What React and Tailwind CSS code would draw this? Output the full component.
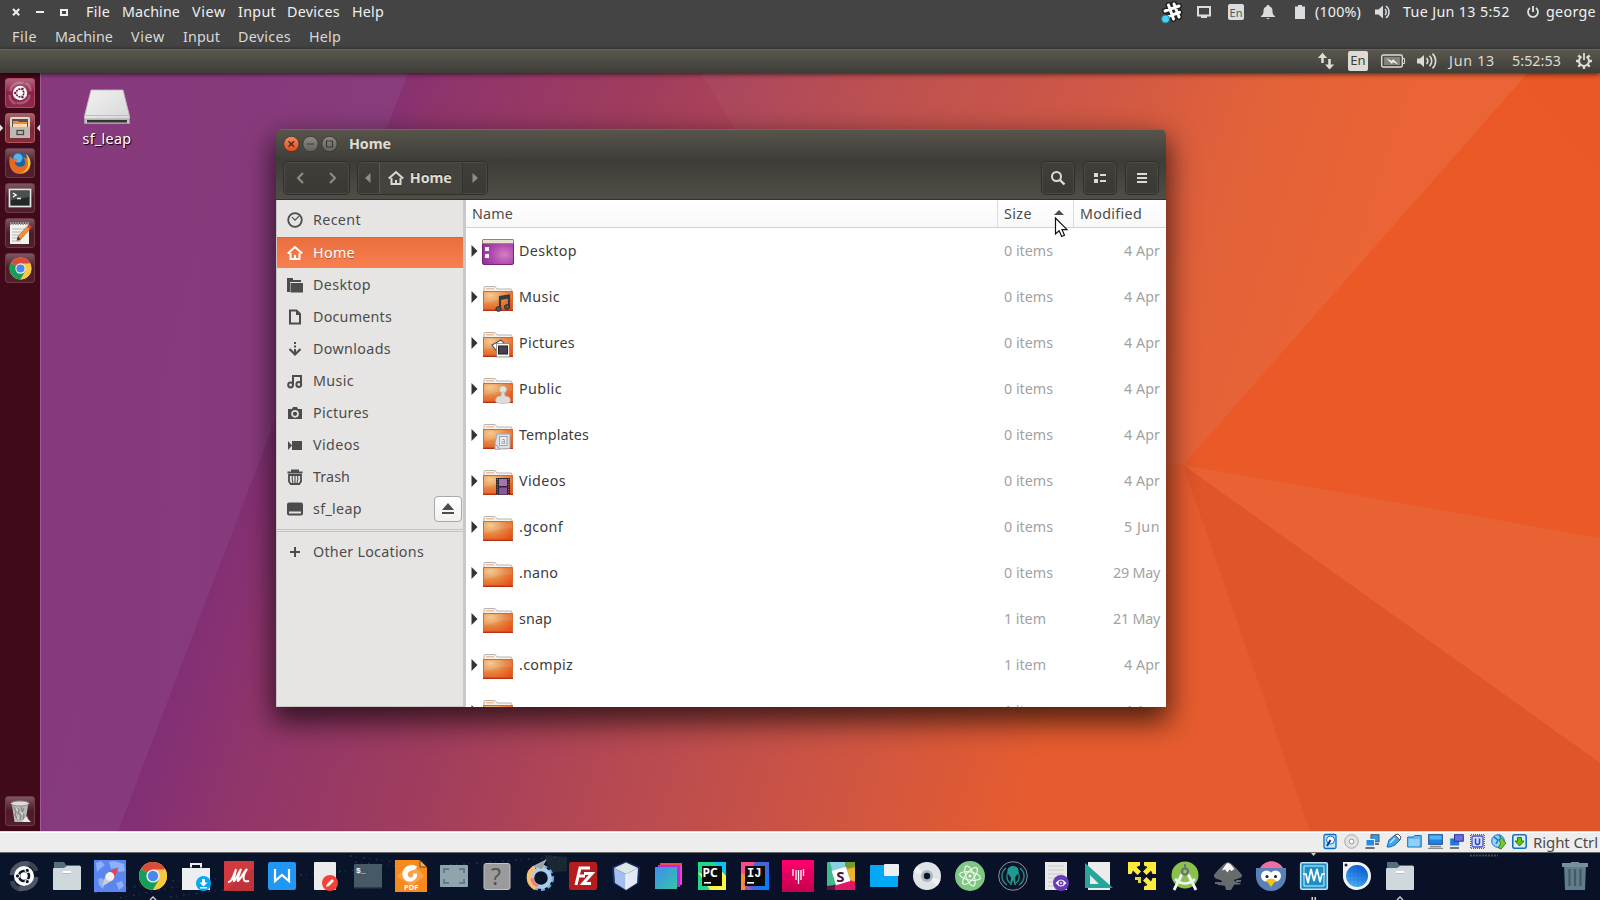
import React, { useLayoutEffect, useRef, useState } from "react";

/* Text that spreads its letters evenly over the width of its box. */
function Fit({ className = "", children }) {
  const box = useRef(null);
  const ink = useRef(null);
  const [gap, setGap] = useState(0);
  useLayoutEffect(() => {
    const n = String(children).length;
    setGap((box.current.clientWidth - ink.current.getBoundingClientRect().width) / n);
  }, []);
  return (
    <span ref={box} className={"block shrink-0 whitespace-nowrap " + className}>
      <span ref={ink} className="inline-block" style={{ letterSpacing: gap + "px" }}>{children}</span>
    </span>
  );
}

function Ico({ s = 16, className = "", children, vb }) {
  return (
    <svg width={s} height={s} viewBox={vb || `0 0 ${s} ${s}`} className={"block shrink-0 overflow-visible " + className}>
      {children}
    </svg>
  );
}

/* ---------- top bars ---------- */

function HostBar() {
  return (
    <div className="flex h-[24px] items-center bg-[#444] text-[#f0f0f0]">
      <div className="flex w-[86px] shrink-0 items-center pl-[12px]">
        <Ico s={8}><path d="M1 1l6.2 6.2M7.2 1L1 7.2" stroke="#eee" strokeWidth="2.1" /></Ico>
        <div className="ml-[16px] h-[2px] w-[8px] bg-[#eee]" />
        <div className="ml-[16px] h-[7px] w-[8px] border-2 border-[#eee]" />
      </div>
      <Fit className="w-[24px]">File</Fit>
      <Fit className="ml-[12px] w-[58px]">Machine</Fit>
      <Fit className="ml-[12px] w-[34px]">View</Fit>
      <Fit className="ml-[12px] w-[38px]">Input</Fit>
      <Fit className="ml-[11px] w-[53px]">Devices</Fit>
      <Fit className="ml-[12px] w-[32px]">Help</Fit>
      <div className="ml-auto flex items-center">
        <Ico s={22} className="mr-[14px]">
          <g stroke="#222" strokeWidth="6" strokeLinecap="round"><path d="M7.5 4l5 14M13 3l5 13M4 10l14-5M5.500 16l13-4.700" /></g>
          <g stroke="#fff" strokeWidth="3" strokeLinecap="round"><path d="M7.500 4l5 14M13 3l5 13M4 10l14-5M5.500 16l13-4.700" /></g>
          <circle cx="4.500" cy="18" r="4" fill="#45d0f7" stroke="#2a6f86" strokeWidth=".8" />
        </Ico>
        <Ico s={14} className="mr-[17px]"><path d="M1 2h12v8.500H1z" fill="none" stroke="#d9dde0" strokeWidth="2" /><path d="M4 11h6v2H4z" fill="#d9dde0" /></Ico>
        <div className="mr-[17px] flex h-[16px] w-[16px] items-center justify-center rounded-[2px] bg-[#d9dde0] text-[11px] leading-none text-[#555]">En</div>
        <Ico s={14} className="mr-[20px]"><path d="M7 0c1 0 1.500.7 1.500 1.400C10.700 2 11.500 4 11.500 6c0 3 .8 4 2.500 5.300V12H0v-.7C1.700 10 2.500 9 2.500 6c0-2 .8-4 3-4.600C5.500.7 6 0 7 0zM5 13h4l-2 1.200z" fill="#d9dde0" /></Ico>
        <Ico s={14} vb="0 0 14 14" className="mr-[5px]"><path d="M3 0h4v1.500h3V14H0V1.500h3z" fill="#d9dde0" /></Ico>
        <Fit className="ml-px w-[46px]">(100%)</Fit>
        <Ico s={16} className="ml-[14px] mr-[12px]"><path d="M0 5.500h3.500L8 1.500v13l-4.500-4H0z" fill="#d9dde0" /><path d="M10 5c1.600 1.500 1.600 4.500 0 6M11 2.200c4 2.500 4 9 0 11.600" fill="none" stroke="#d9dde0" strokeWidth="1.500" /></Ico>
        <Fit className="w-[107px]">Tue Jun 13  5:52</Fit>
        <Ico s={12} className="ml-[17px] mr-[7px]"><path d="M3 2a5 5 0 1 0 6 0" fill="none" stroke="#e2e4e6" strokeWidth="1.700" /><path d="M6 0v6" stroke="#e2e4e6" strokeWidth="1.800" /></Ico>
        <Fit className="mr-[4px] w-[50px]">george</Fit>
      </div>
    </div>
  );
}

function MachineMenu() {
  return (
    <div className="flex h-[25px] items-center bg-[#444] pl-[12px] text-[#d8d8d8]">
      <Fit className="w-[25px]">File</Fit>
      <Fit className="ml-[18px] w-[58px]">Machine</Fit>
      <Fit className="ml-[18px] w-[34px]">View</Fit>
      <Fit className="ml-[18px] w-[37px]">Input</Fit>
      <Fit className="ml-[18px] w-[53px]">Devices</Fit>
      <Fit className="ml-[18px] w-[32px]">Help</Fit>
    </div>
  );
}

function GuestPanel() {
  return (
    <div className="relative z-10 flex h-[24px] items-center justify-end border-t border-[#676459] bg-linear-to-b from-[#5a574e] to-[#3e3d38] pb-[2px] text-[#dfdbd2] shadow-[0_1px_5px_rgba(0,0,0,0.7)]">
      <Ico s={18} className="mr-[13px]"><path d="M5.500 2v9M12.500 7v9" stroke="#dfdbd2" strokeWidth="2.600" /><path d="M.8 6L5.500.8 10.200 6zM8 12.500l4.500 5 4.700-5z" fill="#dfdbd2" /></Ico>
      <div className="mr-[13px] flex h-[20px] w-[20px] items-center justify-center rounded-[2px] bg-[#dfdbd2] text-[13px] leading-none text-[#3f3e39]">En</div>
      <svg width="24" height="14" className="mr-[12px] block"><rect x=".7" y="1" width="20.600" height="12" rx="1.500" fill="none" stroke="#dfdbd2" strokeWidth="1.400" /><rect x="3" y="3" width="16" height="8" fill="#85827a" /><path d="M22 4.500h1.500v5H22" fill="none" stroke="#dfdbd2" /><path d="M5 4l6 3 1-2 6 6-6-3-1 2z" fill="#f2efe8" /></svg>
      <Ico s={20} className="mr-[12px]"><path d="M0 7.500h3L7 4v12l-4-3.500H0z" fill="#dfdbd2" /><path d="M9.500 7c1.600 1.800 1.600 4.200 0 6M12.500 4.800c3 3 3 7.400 0 10.400M15.500 2.600c4.200 4 4.200 10.800 0 14.800" fill="none" stroke="#dfdbd2" strokeWidth="1.600" /></Ico>
      <Fit className="w-[46px]">Jun 13</Fit>
      <Fit className="ml-[17px] w-[49px]">5:52:53</Fit>
      <Ico s={16} className="ml-[15px] mr-[8px]">
        <g stroke="#dfdbd2" strokeWidth="2.400"><path d="M8 13v3M0 8h3M13 8h3M2.300 13.700l2.200-2.200M13.700 13.700l-2.200-2.200M2.300 2.300l2.200 2.200M13.700 2.300l-2.200 2.200" /></g>
        <path d="M5.500 3.600a5 5 0 1 0 5 0" fill="none" stroke="#dfdbd2" strokeWidth="2" /><path d="M8 0v7" stroke="#dfdbd2" strokeWidth="1.800" />
      </Ico>
    </div>
  );
}

/* ---------- wallpaper ---------- */

function Wallpaper() {
  return (
    <svg className="absolute inset-0 h-full w-full" viewBox="0 73 1600 758" preserveAspectRatio="none">
      <defs>
        <linearGradient id="wpMain" gradientUnits="userSpaceOnUse" x1="370" y1="73" x2="1180" y2="330">
          <stop offset="0" stopColor="#822f75" /><stop offset=".1" stopColor="#90356b" /><stop offset=".3" stopColor="#9f3c5e" /><stop offset=".55" stopColor="#b84a50" /><stop offset=".78" stopColor="#cf5542" /><stop offset="1" stopColor="#e65c2e" />
        </linearGradient>
        <linearGradient id="wpLeft" x1="0" y1="0" x2="1" y2="0"><stop offset="0" stopColor="#863a7e" /><stop offset=".6" stopColor="#87397a" /><stop offset="1" stopColor="#893c7a" /></linearGradient>
        <linearGradient id="wpTop" gradientUnits="userSpaceOnUse" x1="700" y1="73" x2="1350" y2="280">
          <stop offset="0" stopColor="#a84660" /><stop offset=".28" stopColor="#be5150" /><stop offset=".58" stopColor="#d05845" /><stop offset=".78" stopColor="#e2613a" /><stop offset="1" stopColor="#ea6435" />
        </linearGradient>
        <linearGradient id="wpRight" gradientUnits="userSpaceOnUse" x1="1200" y1="465" x2="1600" y2="120"><stop offset="0" stopColor="#ea5a28" /><stop offset="1" stopColor="#ea5825" /></linearGradient>
      </defs>
      <rect x="0" y="73" width="1600" height="758" fill="url(#wpMain)" />
      <path d="M0 73H408L118 831H0z" fill="url(#wpLeft)" />
      <path d="M240 73H408L118 831H40z" fill="#fff" opacity=".008" />
      <path d="M700 73H1528L1183 465H952z" fill="url(#wpTop)" />
      <path d="M1528 73H1600V538L1183 465z" fill="url(#wpRight)" />
      <path d="M1183 465L1600 538V763z" fill="#e96234" />
      <path d="M1183 465L1600 763V831H1310z" fill="#e05529" />
    </svg>
  );
}

/* ---------- launcher ---------- */

function ChromeLogo() {
  return (
    <g>
      <circle cx="16" cy="16" r="14" fill="#fbc93f" />
      <path d="M16 16L3.900 9A14 14 0 0 1 28.100 9z" fill="#db4a3a" />
      <path d="M3.900 9A14 14 0 0 0 16 30l6-10.500L16 16z" fill="#149d5b" />
      <path d="M16 9.500h12.400A14 14 0 0 1 16 30l6-10z" fill="#fbc93f" />
      <circle cx="16" cy="16" r="6.600" fill="#f4f4f4" /><circle cx="16" cy="16" r="5.200" fill="#4a87ee" />
    </g>
  );
}

function UbuntuMark({ dark }) {
  return (
    <g>
      <circle cx="16" cy="16" r="8.200" fill="#fff" />
      <circle cx="16" cy="16" r="4.300" fill="none" stroke={dark} strokeWidth="2" />
      {[0, 120, 240].map((a) => (
        <g key={a} transform={`rotate(${a} 16 16)`}><path d="M16 16h-6" stroke="#fff" strokeWidth="1" transform="rotate(60 16 16)" /><circle cx="10.500" cy="16" r="1.900" fill={dark} stroke="#fff" strokeWidth=".9" /></g>
      ))}
    </g>
  );
}

function Tile({ tone, children }) {
  return (
    <div className={"flex h-[30px] w-[30px] shrink-0 items-center justify-center rounded-[3px] border bg-linear-to-b " + tone}>{children}</div>
  );
}

const glass = "border-[#6b3a49] from-[#7d5763] via-[#4c1a29] to-[#511f2d]";

function Launcher() {
  return (
    <div className="relative flex w-[40px] shrink-0 flex-col items-center gap-[5px] bg-[#400a1b] pt-[5px] pb-[5px] shadow-[1px_0_0_#a05a97]">
      <Tile tone="border-[#b04a68] from-[#b26480] via-[#8b1f48] to-[#8c2b4a]">
        <Ico s={28} vb="0 0 32 32"><g fill="none" stroke="#fff" opacity=".22" strokeWidth="3"><path d="M5 14C6 6 14 3 20 5M27 18c-1 8-9 11-15 9M4 18c0 5 3 9 7 10M28 14c0-5-3-8-6-9" /></g><UbuntuMark dark="#6d1638" /></Ico>
      </Tile>
      <Tile tone="border-[#b05560] from-[#a86065] via-[#7d2a35] to-[#83303a]">
        <Ico s={24} vb="0 0 24 24"><rect x="2" y="1" width="20" height="21" rx="1.500" fill="#ddd9d4" /><rect x="4" y="3" width="16" height="8" fill="#5b5048" /><path d="M5 5h5l1 1h8v5H5z" fill="#f08a3c" /><path d="M5 8h14v3H5z" fill="#fbd9b0" /><path d="M2 11h20v11H2z" fill="#bdbab4" /><rect x="9" y="14.500" width="6.500" height="4" fill="none" stroke="#4b4a46" strokeWidth="1.300" /></Ico>
      </Tile>
      <Tile tone={glass}>
        <Ico s={24} vb="0 0 24 24"><circle cx="12" cy="12" r="10.500" fill="#1e63a8" /><circle cx="10" cy="7" r="4.500" fill="#56b5e8" /><path d="M2 5c1 1 1 2 3 3 2-.5 4 0 5 1-3 1-4 3-2 5 3 3 8 2 9-1 .5-3-.5-5-2-7 5 2 5 3 5 0l2 4c2 7-3 13-10 13S-.500 17 2 5z" fill="#e66a1f" /><path d="M18 3c4 3 6 9 3 14-2 4-6 5-9 5 5-1 8-5 8-9 0-4-1-7-2-10z" fill="#f8c93c" /></Ico>
      </Tile>
      <Tile tone={glass}>
        <Ico s={24} vb="0 0 24 24"><rect x="1.500" y="3.500" width="21" height="17" fill="#222a29" stroke="#e6e6e4" strokeWidth="1.700" /><path d="M3 5h18v6L3 14z" fill="#4a504f" /><path d="M5 7l3 2-3 2M9 12.500h4" fill="none" stroke="#fff" strokeWidth="1.400" /></Ico>
      </Tile>
      <Tile tone={glass}>
        <Ico s={24} vb="0 0 24 24"><rect x="2" y="3" width="19" height="20" fill="#f2f1ee" /><path d="M2 2.500h19" stroke="#9a9a96" strokeWidth="3" strokeDasharray="1.500 1" /><path d="M4 8h13M4 11h10M4 14h8M4 17h6M4 20h9" stroke="#b5b5b0" strokeWidth="1" /><path d="M10 15.500L19 5.500l3 2.500-9.500 10.500-3.500 1z" fill="#f0913a" stroke="#b55a1a" strokeWidth=".6" /><path d="M19 5.500l2-2.200 3 2.700-2 2z" fill="#e0393e" /><path d="M9 19.500l1-4 2.500 2.800z" fill="#333" /></Ico>
      </Tile>
      <Tile tone={glass}><Ico s={25} vb="0 0 32 32"><ChromeLogo /></Ico></Tile>
      <div className="mt-auto">
        <Tile tone={glass}>
          <Ico s={24} vb="0 0 24 24"><path d="M4 6h16l-2.500 17h-11z" fill="#b9bab7" /><ellipse cx="12" cy="4.500" rx="9" ry="2.500" fill="#dcdcd9" stroke="#8c8c88" /><path d="M6 8l2 5-1 3 3 5M9 9l2 2-1 3 3 2-1 5M16 9l-2 5 2 2-1 5M13 8l1 4" stroke="#868783" strokeWidth="1.300" fill="none" /><path d="M8 9l2 1-1 2zM13 13l2 1-1 3zM9 18l2 1-1 2z" fill="#ededea" /><path d="M14 22l5-5 1 3 3 3h-7z" fill="#e9e9e6" /></Ico>
        </Tile>
      </div>
      <svg className="absolute top-[50px] left-0" width="40" height="10"><path d="M0 1.500L3.200 5 0 8.500zM40 1.500L36.800 5 40 8.500z" fill="#e6dfe0" /></svg>
    </div>
  );
}

/* ---------- file manager ---------- */

const HomeGlyph = ({ c }) => (
  <Ico><path d="M.8 8.500L8 2l7.200 6.500" fill="none" stroke={c} strokeWidth="2" /><path d="M3.500 8v6h9V8" fill="none" stroke={c} strokeWidth="2" /><path d="M7 10h2v4H7z" fill={c} /></Ico>
);

const G = "#4c4c4c";
const places = [
  { n: "Desktop", w: "w-[58px]", i: <Ico><path d="M0 1h6v2h8v2H3v10H0z" fill={G} /><path d="M3.500 6H16v9.500H3.500z" fill={G} /></Ico> },
  { n: "Documents", w: "w-[79px]", i: <Ico><path d="M3 1.500h6.500L13 5v9.500H3z" fill="none" stroke={G} strokeWidth="2" /><path d="M9 1v5h4z" fill={G} /></Ico> },
  { n: "Downloads", w: "w-[78px]", i: <Ico><path d="M8 1v2M8 4.500v2M8 8v5" stroke={G} strokeWidth="2" /><path d="M2.500 8L8 13.500 13.500 8" fill="none" stroke={G} strokeWidth="2.200" /></Ico> },
  { n: "Music", w: "w-[41px]", i: <Ico><path d="M6 12V3h8v8" fill="none" stroke={G} strokeWidth="2" /><circle cx="3.600" cy="12" r="2.400" fill="none" stroke={G} strokeWidth="2" /><circle cx="11.800" cy="11.500" r="2.400" fill="none" stroke={G} strokeWidth="2" /></Ico> },
  { n: "Pictures", w: "w-[56px]", i: <Ico><path d="M1 4h4l1-2h4l1 2h4v10H1z" fill={G} /><circle cx="8" cy="8.800" r="3" fill="none" stroke="#e6e5e4" strokeWidth="1.700" /></Ico> },
  { n: "Videos", w: "w-[47px]", i: <Ico><path d="M5 4h10v9H5z" fill={G} /><path d="M1 4l4 4.500L1 13z" fill={G} /></Ico> },
  { n: "Trash", w: "w-[37px]", i: <Ico><path d="M.5 3.500h15M4 1.500h8" stroke={G} strokeWidth="2" /><path d="M2 6h12v6.500l-1.800 2.500H3.800L2 12.500z" fill="none" stroke={G} strokeWidth="1.800" /><path d="M5.500 6c-.7 3-.7 5 .5 8M8 6v8M10.500 6c.7 3 .7 5-.5 8" fill="none" stroke={G} strokeWidth="1.100" /></Ico> },
  { n: "sf_leap", w: "w-[49px]", eject: true, i: <Ico><rect x="0" y="1.500" width="16" height="13" rx="2" fill={G} /><path d="M2 10.500h12v2H2z" fill="#e6e5e4" /></Ico> },
];

function Sidebar() {
  return (
    <div className="flex w-[190px] shrink-0 flex-col border-r-[3px] border-b border-l border-r-[#cac8c5] border-b-[#cac8c5] border-l-[#cac8c5] bg-[#e6e5e4] text-[#4c4c4c]">
      <div className="flex h-[37px] items-center gap-[10px] pt-[3px] pl-[10px]">
        <Ico><circle cx="8" cy="8" r="6.800" fill="none" stroke={G} strokeWidth="1.800" /><path d="M5 5.200l3 3 4-4" fill="none" stroke={G} strokeWidth="1.200" /></Ico>
        <Fit className="w-[48px]">Recent</Fit>
      </div>
      <div className="mb-px flex h-[31px] items-center gap-[10px] border-t border-[#d9673a] bg-linear-to-b from-[#e96f3d] to-[#f87f50] pl-[10px] text-white [text-shadow:0_1px_0_rgba(0,0,0,0.3)]">
        <HomeGlyph c="#fff" /><Fit className="w-[42px]">Home</Fit>
      </div>
      {places.map((p) => (
        <div key={p.n} className="flex h-[32px] shrink-0 items-center gap-[10px] pl-[10px]">
          {p.i}<Fit className={p.w}>{p.n}</Fit>
          {p.eject && (
            <div className="mr-[1px] ml-auto flex h-[26px] w-[28px] items-center justify-center rounded-[4px] border border-[#aaa8a4] bg-linear-to-b from-white to-[#f1f0ef]">
              <Ico s={12}><path d="M6 0l6 7H0zM0 9h12v2H0z" fill={G} /></Ico>
            </div>
          )}
        </div>
      ))}
      <div className="mt-[4px] h-[3px] border-y border-[#c6c4c1]" />
      <div className="flex h-[39px] items-center gap-[10px] pl-[10px]">
        <Ico><path d="M8 3v10M3 8h10" stroke={G} strokeWidth="2" /></Ico>
        <Fit className="w-[111px]">Other Locations</Fit>
      </div>
    </div>
  );
}

const emblems = {
  music: <g><path d="M17 23V11l9-1.500V20" fill="none" stroke="#3a3a3a" strokeWidth="2.200" /><path d="M17 10.500l9-1.500v3.500l-9 1.500z" fill="#3a3a3a" /><ellipse cx="15.500" cy="23" rx="2.700" ry="2.300" fill="#555" stroke="#2d2d2d" /><ellipse cx="24" cy="21" rx="2.700" ry="2.300" fill="#555" stroke="#2d2d2d" /></g>,
  pictures: <g><path d="M9 13l9-5 3 3-6 10z" fill="#fff" stroke="#555" strokeWidth="1.200" /><rect x="13.500" y="11.500" width="13" height="13.500" fill="#f5f5f3" stroke="#777" strokeWidth=".7" /><rect x="15.500" y="14" width="9" height="8" fill="#4b3d52" stroke="#222" /></g>,
  public: <g><circle cx="20" cy="11.500" r="3.600" fill="#e3e3e1" stroke="#aaa" strokeWidth=".5" /><path d="M18.500 14h3l.5 4c4 0 5.500 2 5.500 4.500 0 2.500-3 3-7.500 3s-7.500-.5-7.500-3c0-2.500 2-4.500 5.500-4.500z" fill="#dcdcda" stroke="#aaa" strokeWidth=".5" /></g>,
  templates: <g><path d="M12 25.500V19.500l2-9.500h13v14.500l-9 .5z" fill="#dddfe3" stroke="#a4a7ae" /><rect x="16.500" y="12.500" width="7.500" height="9" fill="#eceef0" stroke="#a0a4ac" /><path d="M12 20l5 5" stroke="#8f939b" /><text x="18" y="20" fontSize="8" fill="#8a8e96">a</text></g>,
  videos: <g><rect x="13" y="8" width="14" height="17" fill="#2e2830" /><path d="M14.300 9v16M25.700 9v16" stroke="#e07a3a" strokeWidth="1" strokeDasharray="1 1.500" /><rect x="16" y="9" width="8" height="7" fill="#a574b4" /><rect x="16" y="17.500" width="8" height="7" fill="#8a559c" /></g>,
};

function Folder({ kind }) {
  if (kind === "desktop")
    return (
      <svg width="32" height="26" className="mr-[5px] ml-[5px] mt-[2px] block shrink-0">
        <rect x=".5" y=".5" width="31" height="25" rx="1.500" fill="url(#deskFill)" stroke="#7b1f78" />
        <path d="M.5 4.500V1.500Q.5.500 1.500.5h29q1 0 1 1v3z" fill="#e4e3cc" stroke="#88875f" strokeWidth=".8" />
        <path d="M3 8h4v4H3zM3 15h4v4H3z" fill="#f5eef5" />
      </svg>
    );
  return (
    <svg width="30" height="26" className="mr-[6px] ml-[6px] mt-[4px] block shrink-0 overflow-visible">
      <path d="M1 6V1.500Q1 .5 2 .5h10l2 2.500h14q.8 0 .8 1V6z" fill="#f4f3f1" stroke="#b9b4ae" />
      <path d="M3 2.800h8" stroke="#f0a673" />
      <path d="M0 5.500h30V24.500H0z" fill="url(#folderFill)" />
      <path d="M.5 5.500h29v18.500H.5z" fill="none" stroke="#d8692f" />
      <path d="M1 6.500h28v6C20 12 11 14 1 18z" fill="#fff" opacity=".1" />
      <path d="M0 24.300h30" stroke="#b02a0c" strokeWidth="1.200" />
      {emblems[kind]}
    </svg>
  );
}

const rows = [
  ["Desktop", "w-[58px]", "0 items", "4 Apr", "desktop"],
  ["Music", "w-[41px]", "0 items", "4 Apr", "music"],
  ["Pictures", "w-[56px]", "0 items", "4 Apr", "pictures"],
  ["Public", "w-[43px]", "0 items", "4 Apr", "public"],
  ["Templates", "w-[70px]", "0 items", "4 Apr", "templates"],
  ["Videos", "w-[47px]", "0 items", "4 Apr", "videos"],
  [".gconf", "w-[44px]", "0 items", "5 Jun"],
  [".nano", "w-[39px]", "0 items", "29 May"],
  ["snap", "w-[33px]", "1 item", "21 May"],
  [".compiz", "w-[54px]", "1 item", "4 Apr"],
  ["", "w-[40px]", "1 item", "4 Apr"],
];
const dateWidth = { "4 Apr": "w-[36px]", "5 Jun": "w-[36px]", "29 May": "w-[47px]", "21 May": "w-[47px]" };

function FileList() {
  return (
    <div className="relative flex min-w-0 flex-1 flex-col overflow-hidden bg-white">
      <svg width="0" height="0" className="absolute">
        <defs>
          <radialGradient id="folderFill" cx=".25" cy=".2" r=".95"><stop offset="0" stopColor="#f5c585" /><stop offset=".5" stopColor="#e58540" /><stop offset="1" stopColor="#ea4d17" /></radialGradient>
          <radialGradient id="deskFill" cx=".7" cy=".6" r=".8"><stop offset="0" stopColor="#d77fc0" /><stop offset=".5" stopColor="#b04bb0" /><stop offset="1" stopColor="#83358a" /></radialGradient>
        </defs>
      </svg>
      <div className="flex h-[28px] shrink-0 border-b border-[#d3d2d0] bg-linear-to-b from-white to-[#f8f8f8] text-[#4c4c4c]">
        <div className="flex w-[532px] items-center border-r border-[#dddcda] pl-[6px]"><Fit className="w-[41px]">Name</Fit></div>
        <div className="flex w-[76px] items-center border-r border-[#dddcda] pl-[6px]">
          <Fit className="w-[28px]">Size</Fit>
          <svg width="10" height="5" className="mt-[-2px] ml-[22px]"><path d="M5 0l5 5H0z" fill={G} /></svg>
        </div>
        <div className="flex items-center pl-[6px]"><Fit className="w-[62px]">Modified</Fit></div>
      </div>
      {rows.map((r, i) => (
        <div key={i} className="flex h-[46px] shrink-0 items-center text-[#3c3c3c]">
          <svg width="7" height="12" className="ml-[5px] -mr-px block shrink-0"><path d="M.5 0l6 6-6 6z" fill="#333" /></svg>
          <Folder kind={r[4]} />
          <div className="w-[485px]">{r[0] && <Fit className={r[1]}>{r[0]}</Fit>}</div>
          <div className="w-[76px] text-[#a2a2a2]"><Fit className={r[2] === "1 item" ? "w-[42px]" : "w-[49px]"}>{r[2]}</Fit></div>
          <div className="mr-[6px] ml-auto text-[#a2a2a2]"><Fit className={dateWidth[r[3]]}>{r[3]}</Fit></div>
        </div>
      ))}
    </div>
  );
}

const key = "rounded-[5px] border border-[#302f2b] shadow-[inset_0_0_0_1px_#4b4a44] bg-linear-to-b from-[#403f3a] to-[#3a3935]";

function FilesWindow() {
  return (
    <div className="absolute top-[56px] left-[276px] flex h-[578px] w-[890px] flex-col overflow-hidden rounded-t-[6px] shadow-[0_12px_28px_3px_rgba(0,0,0,0.66)]">
      <div className="flex h-[29px] shrink-0 items-center border-t border-[#6c695e] bg-linear-to-b from-[#57544b] to-[#403f3a] pb-px pl-[7px]">
        <svg width="56" height="18" className="block">
          <defs>
            <linearGradient id="btnRed" x1="0" y1="0" x2="0" y2="1"><stop offset="0" stopColor="#f58a64" /><stop offset="1" stopColor="#de4b18" /></linearGradient>
            <linearGradient id="btnGrey" x1="0" y1="0" x2="0" y2="1"><stop offset="0" stopColor="#8d8a82" /><stop offset="1" stopColor="#64625b" /></linearGradient>
          </defs>
          <circle cx="8.300" cy="9" r="7.700" fill="url(#btnRed)" stroke="#33322e" strokeWidth=".8" />
          <circle cx="27.500" cy="9" r="7.700" fill="url(#btnGrey)" stroke="#33322e" strokeWidth=".8" />
          <circle cx="46.500" cy="9" r="7.700" fill="url(#btnGrey)" stroke="#33322e" strokeWidth=".8" />
          <path d="M5.500 6.200l5.600 5.600M11.100 6.200l-5.600 5.600" stroke="#3d2b23" strokeWidth="1.300" />
          <path d="M24 9h7M43.500 6h6v6h-6z" fill="none" stroke="#3b3a36" strokeWidth="1.200" />
        </svg>
        <Fit className="ml-[10px] w-[42px] font-bold text-[#dfdbd2]">Home</Fit>
      </div>
      <div className="flex h-[42px] shrink-0 items-center border-b border-[#33322e] bg-linear-to-b from-[#3c3b37] to-[#504e46] px-[7px] pb-px">
        <div className={"flex h-[34px] w-[67px] items-center justify-between px-[12px] " + key}>
          <svg width="8" height="12"><path d="M7 1L2 6l5 5" fill="none" stroke="#918e86" strokeWidth="2" /></svg>
          <svg width="8" height="12"><path d="M1 1l5 5-5 5" fill="none" stroke="#918e86" strokeWidth="2" /></svg>
        </div>
        <div className={"ml-[7px] flex h-[34px] w-[131px] items-center " + key}>
          <div className="flex w-[21px] justify-center"><svg width="6" height="10"><path d="M5.500 0v10L0 5z" fill="#918e86" /></svg></div>
          <div className="flex h-[31px] w-[85px] items-center gap-[6px] border-x border-l-[#5b594f] border-r-[#33322e] bg-[#45433d] pl-[8px]">
            <HomeGlyph c="#dfdbd2" /><Fit className="w-[42px] font-bold text-[#dfdbd2] [text-shadow:0_-1px_0_#222]">Home</Fit>
          </div>
          <div className="flex w-[24px] justify-center"><svg width="6" height="10"><path d="M.5 0v10L6 5z" fill="#918e86" /></svg></div>
        </div>
        <div className="ml-auto flex gap-[8px]">
          <div className={"flex h-[34px] w-[34px] items-center justify-center " + key}><Ico><circle cx="6.500" cy="6.500" r="4.500" fill="none" stroke="#dfdbd2" strokeWidth="2" /><path d="M9.800 9.800l4.700 4.700" stroke="#dfdbd2" strokeWidth="2.400" /></Ico></div>
          <div className={"flex h-[34px] w-[34px] items-center justify-center " + key}><Ico><path d="M2 3h4v4H2zM2 9h4v4H2zM8 4h6v2H8zM8 10h6v2H8z" fill="#dfdbd2" /></Ico></div>
          <div className={"flex h-[34px] w-[34px] items-center justify-center " + key}><Ico><path d="M3 3h10v2H3zM3 7h10v2H3zM3 11h10v2H3z" fill="#dfdbd2" /></Ico></div>
        </div>
      </div>
      <div className="flex min-h-0 flex-1"><Sidebar /><FileList /></div>
    </div>
  );
}

/* ---------- status bar of the virtual machine ---------- */

const B = "#0f6fc6";
const statusIcons = [
  <g><rect x="1" y=".5" width="12" height="14" rx="1.500" fill="#bfe2f8" stroke={B} strokeWidth="1.300" /><circle cx="7.500" cy="6" r="4" fill="#fff" stroke={B} /><path d="M7.500 6L4 12" stroke="#0a3f86" strokeWidth="2" /></g>,
  <g><circle cx="7.500" cy="7.500" r="6.800" fill="#e2e2e2" stroke="#a8a8a8" /><circle cx="7.500" cy="7.500" r="2.300" fill="#fff" stroke="#999" /></g>,
  <g><rect x="6" y=".7" width="8" height="7" fill="#2f9bf0" stroke="#555" /><rect x="1" y="5.500" width="8.500" height="6.500" fill="#2688ea" stroke="#e8f2fb" /><path d="M.5 14h9M10 10h4" stroke="#444" strokeWidth="1.600" /></g>,
  <g><path d="M1 13l2-7 6-5 5 5-5 5-5 2z" fill="#42a4ee" stroke={B} /><path d="M9 1l3-1 3 3-1 3z" fill="#fff" stroke="#556" /><path d="M4 9l5-5" stroke="#bfe4ff" strokeWidth="1.500" /></g>,
  <g><path d="M.7 3h6l1-1.500h6.500V13H.7z" fill="#63b7f2" stroke={B} /><path d="M1.500 5h11v7.300h-11z" fill="#8fd0fa" /></g>,
  <g><rect x=".7" y=".7" width="13.600" height="9.600" fill="#2183ea" stroke="#1a4f8a" /><path d="M1.500 1.500h12v4h-12z" fill="#55b2f8" /><path d="M2 12.500h11M0 14.300h15" stroke="#8a8f94" strokeWidth="1.300" /></g>,
  <g><rect x=".7" y="4" width="10" height="8" fill="#2277dd" stroke="#e0eefb" /><rect x="5.500" y=".7" width="8.800" height="6.500" fill="#6d6ee0" stroke="#2c3596" /><path d="M1 14h9" stroke="#444" strokeWidth="1.400" /></g>,
  <g><rect x="2" y="2" width="11" height="11" rx="1.500" fill="#d5dcfb" stroke="#4854c0" strokeWidth="1.300" /><path d="M1 .7h13M1 14.300h13M.7 1v13M14.300 1v13" stroke="#4854c0" strokeWidth="1.300" strokeDasharray="1 1" /><path d="M5.500 4.500v4q0 2 2 2t2-2v-4" fill="none" stroke="#3641b5" strokeWidth="1.500" /></g>,
  <g><circle cx="7" cy="7" r="6.300" fill="#9ad5f5" stroke={B} /><path d="M3 3l4 3-2 4M8 1l2 3" stroke="#1d7fd1" strokeWidth="1.600" fill="none" /><path d="M8 5l3-.5 4 4.500-5 6-2.500-1 2-4.500z" fill="#6fce2c" stroke="#246a10" strokeWidth=".8" /></g>,
  <g><rect x=".8" y=".8" width="13.400" height="13.400" rx="2" fill="#d7effd" stroke="#1a73b8" strokeWidth="1.600" /><path d="M5.500 3.500h4V7H12l-4.500 5L3 7h2.500z" fill="#5fc500" stroke="#2d6b00" strokeWidth=".9" /></g>,
];

function StatusBar() {
  return (
    <div className="flex h-[22px] items-center justify-end border-t border-b border-t-[#dcdcdc] border-b-[#6a6a6a] bg-[#ededed] text-[15px] text-[#4b4b4b] shadow-[inset_0_1px_0_#fff]">
      {statusIcons.map((g, i) => <Ico key={i} s={15} className="mr-[6px] -translate-y-px">{g}</Ico>)}
      <Fit className="mr-[2px] w-[65px]">Right Ctrl</Fit>
    </div>
  );
}

/* ---------- dock ---------- */

const FilesIcon = (
  <g><path d="M3 2h10l2 3h14v9H3z" fill="#546e7a" /><path d="M2 9q0-1 1-1h10l3-2h13q1 0 1 1v22q0 1-1 1H3q-1 0-1-1z" fill="#cfd8dc" /><path d="M12 11h8v2.200h-8z" fill="#fff" /><path d="M12 13.200h8v.8h-8z" fill="#a9b5ba" /></g>
);

const dock = [
  <g><g fill="none" stroke="#b9bcc4" strokeWidth="5" opacity=".4"><path d="M4 15C5 6 14 2 21 4M28 17c-1 9-10 13-17 11" /><path d="M4 21c1 5 5 8 9 8M28 11c-1-4-4-7-8-7" opacity=".7" /></g><circle cx="16" cy="16" r="10" fill="#fff" /><circle cx="16" cy="16" r="5" fill="none" stroke="#101727" strokeWidth="2.600" />{[0, 120, 240].map((a) => <circle key={a} cx="9.500" cy="16" r="2.100" fill="#101727" stroke="#fff" transform={`rotate(${a} 16 16)`} />)}</g>,
  FilesIcon,
  <g><rect width="32" height="32" fill="#5b86f0" /><path d="M2 3l5-2 4 4-4 3-4 4zM15 2l5-1 10 3 1 7-6 1-4-4-4 1zM4 19l4-1 3 3-2 8-4-4zM22 23l6-2 2 5-5 4z" fill="#8fb0fb" /><path d="M24.500 7L13.500 13l6.500 6z" fill="#e8414d" /><path d="M8 26.500l4-12.500 7 6z" fill="#cfd0ce" /><circle cx="16" cy="16.500" r="4.400" fill="#f2f2f0" /></g>,
  <ChromeLogo />,
  <g><path d="M11 7.500V4h10v3.500" fill="none" stroke="#eceff1" strokeWidth="2" /><path d="M2 8h28v22H2z" fill="#eceeef" /><circle cx="23.500" cy="23.500" r="7.500" fill="#03a9f4" /><path d="M22 19h3v3.500h2.500l-4 4-4-4H22zM20 27h7v1.400h-7z" fill="#fff" /></g>,
  <g><rect x="1" y="1" width="30" height="30" rx="1" fill="#d23a3f" /><path d="M1 31L31 8v23z" fill="#b52f38" opacity=".6" /><path d="M5 22c4 1 6-8 8-13-1 6-3 12-2 12 2-1 4-8 7-12-2 6-4 12-3 12 2-1 5-8 9-12-4 6-6 14 2 12" fill="none" stroke="#fff" strokeWidth="2" /></g>,
  <g><rect x="2" y="2" width="28" height="28" rx="2" fill="#2196f3" /><path d="M9 9v12l7-6 7 6V9" fill="none" stroke="#fff" strokeWidth="2.200" /></g>,
  <g><rect x="5" y="2" width="22" height="28" rx="1" fill="#ececec" /><circle cx="21" cy="23" r="8" fill="#f44336" /><path d="M17 27l1-3 5-5 2 2-5 5z" fill="#fff" /></g>,
  <g><rect x="2" y="4" width="28" height="24" rx="1" fill="#455a64" /><path d="M2 27h28v1.500H2z" fill="#2c3e47" /><text x="4" y="13" fontSize="8" fontWeight="bold" fill="#fff" fontFamily="Liberation Mono">$_</text></g>,
  <g><path d="M0 0h25l7 7v25H0z" fill="#f68a1f" /><path d="M25 0h7v7z" fill="#111a2c" /><path d="M25 0v7h7z" fill="#f9a64c" stroke="#3a2410" strokeWidth=".7" /><path d="M16 3L30 16 16 26 2 16z" fill="#fbb065" opacity=".6" /><path d="M22 6.500c-7-4-15 1-14.500 8 .5 7 8 9 12.500 5 2-2 2.500-4 2-6h-4c1 3-1 4.500-3 4-3-1-3-5 0-6.500 3-1 6-1 7-4.500z" fill="#fff" /><text x="9" y="30" fontSize="7.500" fontWeight="bold" fill="#fff">PDF</text></g>,
  <g><rect x="2" y="5" width="28" height="22" rx="1" fill="#90a4ae" /><path d="M6 13V9h5M21 9h5v4M26 19v4h-5M11 23H6v-4" fill="none" stroke="#607d8b" strokeWidth="2" /></g>,
  <g><rect x="3" y="3.500" width="26" height="26" rx="2" fill="#9b9b9b" stroke="#c3c3c3" /><text x="10" y="25" fontSize="23" fill="#555">?</text></g>,
  <g><circle cx="17" cy="18" r="11.500" fill="none" stroke="#72b0dc" strokeWidth="3" strokeDasharray="4 3" /><circle cx="17" cy="18" r="8.800" fill="none" stroke="#a9cde8" strokeWidth="4" /><path d="M11 8c-8 4-8 15 1 20" fill="none" stroke="#f7be78" strokeWidth="5" /><path d="M14 26c-4-1-6-5-6-8" fill="none" stroke="#ec8370" strokeWidth="3" /><path d="M8 7L22 0l-3 5 2 1-4 4-3-2z" fill="#9ba0a6" stroke="#dfe2e5" strokeWidth=".6" /></g>,
  <g><rect x="2" y="2" width="28" height="28" rx="2" fill="#b71c1c" /><path d="M9 25L13 8h10M11 16h7M17 13.500h8L16 23.500h8" fill="none" stroke="#fff" strokeWidth="3" /></g>,
  <g><path d="M16 1l14 6-1 16-13 8-13-8L2 7z" fill="#23357a" opacity=".7" /><path d="M16 2.500l12 5.500-12 6L4 8z" fill="#dce8e6" /><path d="M4 8l12 6v16L5 23z" fill="#a3bfed" /><path d="M28 8l-12 6v16l11-7z" fill="#e3eaf6" /><path d="M16 14v15" stroke="#fff" /></g>,
  <g><path d="M7 3h22v22H7z" fill="#ef4a4a" /><path d="M5 5h22v22H5z" fill="#b02ce0" /><path d="M27 5v20l2-1V5z" fill="#f23fd0" /><rect x="2" y="7" width="22" height="22" fill="url(#teal)" /></g>,
  <g><rect x="2" y="2" width="28" height="28" fill="#21d789" /><path d="M2 12L14 30H30V6L20 22z" fill="#fcf84a" /><path d="M18 2h12v14z" fill="#07c3f2" /><rect x="6" y="6" width="20" height="20" fill="#0b0b0b" /><text x="6.500" y="17" fontSize="12" fontWeight="bold" fill="#fff">PC</text><path d="M8 22h7v1.600H8z" fill="#fff" /></g>,
  <g><rect x="2" y="2" width="28" height="28" fill="#4466dd" /><path d="M2 2h14l-8 14-6-2z" fill="#fe4a88" /><path d="M2 13l8 3-4 14H2z" fill="#f78f2c" /><path d="M30 12L18 30h12z" fill="#087cfa" /><path d="M8 30L4 22l10 8z" fill="#b04fb5" /><rect x="6" y="6" width="20" height="20" fill="#0b0b0b" /><text x="8" y="17" fontSize="12" fontWeight="bold" fill="#fff" fontFamily="Liberation Mono">IJ</text><path d="M8 22h7v1.600H8z" fill="#fff" /></g>,
  <g><rect width="32" height="32" fill="url(#pink)" /><path d="M11 9v7M14 10v10M16.500 10v14M19 10v10M21.500 9v7" stroke="#fff" strokeWidth="1.300" /></g>,
  <g><rect x="2" y="2" width="28" height="28" rx="1" fill="#3fb98f" /><path d="M5 2h17l-2 8-12 4z" fill="#86d2de" /><path d="M20 2h10v6l-10 3z" fill="#7a9a2a" /><path d="M22 9l8-2v14l-5 1z" fill="#edb32c" /><path d="M8 25l17-5 5 2v8H8z" fill="#e01765" /><path d="M2 26l8-1v5H2z" fill="#5b1440" /><rect x="8.500" y="8.500" width="15" height="15" fill="#fff" transform="rotate(-17 16 16)" /><text x="11.200" y="21.500" fontSize="15" fontWeight="bold" fill="#4a154b">S</text></g>,
  <g><rect x="2" y="5" width="28" height="22" rx="1" fill="#03a9f4" /><rect x="16" y="4" width="15" height="12" rx="1" fill="#eceff1" /></g>,
  <g><circle cx="16" cy="16" r="14" fill="#dfe3e6" /><path d="M16 16L6 6a14 14 0 0 0-3.500 6zM16 16l10 10a14 14 0 0 0 3.500-6z" fill="#eff1f3" /><circle cx="16" cy="16" r="6" fill="#adb8be" /><circle cx="16" cy="16" r="3.200" fill="#0a142a" /></g>,
  <g><circle cx="16" cy="16" r="15" fill="#81c784" /><g fill="none" stroke="#f2fbf2" strokeWidth="1.100">{[10, 70, 130].map((a) => <ellipse key={a} cx="16" cy="16" rx="10.500" ry="4" transform={`rotate(${a} 16 16)`} />)}</g><circle cx="16" cy="16" r="1.500" fill="#fff" /></g>,
  <g><circle cx="16" cy="16" r="14.300" fill="#10142a" stroke="#8b8f99" strokeWidth="1" /><g fill="none" stroke="#1f8d85" strokeWidth="1.400"><path d="M9 8c-6 5-5 13 1 17M23 8c6 5 5 13-1 17M12 11c-3 3-3 9 1 12M20 11c3 3 3 9-1 12" /></g><path d="M16 6c4 0 6 3 5.500 6s-3 4-3.500 6l1 7h-1.500l-1.500-5-1.500 5H13l1-7c-.5-2-3-3-3.500-6S12 6 16 6z" fill="#1f9a90" /></g>,
  <g><rect x="5" y="2" width="22" height="28" fill="#e8e8e8" /><path d="M8 6h16M8 10h16M8 14h16M8 18h10M8 22h6M8 26h6" stroke="#c8c8c8" strokeWidth="1" /><circle cx="21" cy="23" r="8" fill="#673ab7" /><path d="M15.500 23q5.500-7 11 0-5.500 7-11 0z" fill="#fff" /><circle cx="21" cy="23" r="2.500" fill="#673ab7" /><circle cx="21" cy="23" r=".9" fill="#fff" /></g>,
  <g><rect x="5" y="2" width="22" height="28" fill="#ececec" /><path d="M2 3v25h28zM7 15l9 9H7z" fill="#26a69a" fillRule="evenodd" /></g>,
  <g><path d="M2 2h12v3.500L10.500 7 15 11.500 11.500 15 7 10.500 5.500 14H2zM30 2v12h-3.500L25 10.500 20.500 15 17 11.500 21.500 7 18 5.500V2zM30 30H18v-3.500l3.500-1.500-4.500-4.500 3.500-3.500 4.500 4.500 1.500-3.500H30z" fill="#ffeb3b" /><path d="M9 17h6v6h-3v-3H9z" fill="#e8d53a" /></g>,
  <g><circle cx="16" cy="15" r="13.500" fill="#8bc34a" /><path d="M5 30L13 14M27 30L19 14" stroke="#f1f4f5" strokeWidth="2.800" /><path d="M6 19q10 9 20 0" fill="none" stroke="#f1f4f5" strokeWidth="2.400" /><circle cx="16" cy="11.500" r="4.300" fill="#6b7a74" /><path d="M15 4h2v5h-2z" fill="#6b7a74" /><circle cx="16" cy="11.500" r="1.700" fill="#9ccc65" /></g>,
  <g><path d="M16 2c3 0 12 10 14 13 1 3-5 4-8 5 1 3 6 2 7 4-2 1-5 0-7 1l-3 5h-5l-1-4c-3-1-6 0-8-2 1-2 5-1 5-3-3-2-9-2-8-6C4 12 13 2 16 2z" fill="#666b6e" /><path d="M16 3c2 0 5 4 6.500 6l-3 2-2-1.500-2 3-2.500-3-3 1C11.500 7.500 14.500 3 16 3z" fill="#f5f5f5" /><path d="M3 23h5M24 21h5" stroke="#666b6e" strokeWidth="1.800" /></g>,
  <g><path d="M5 8C10-1 23-1 28 8z" fill="#f06fa0" /><path d="M1 8h30v8c0 8-6 15-15 15S1 24 1 16z" fill="#5a80b8" /><circle cx="11.500" cy="16" r="5.500" fill="#fff" /><circle cx="20.500" cy="16" r="5.500" fill="#fff" /><circle cx="12" cy="16.500" r="1.500" fill="#17212c" /><circle cx="20.500" cy="16.500" r="1.500" fill="#17212c" /><path d="M11 20q5-3 10 0l-5 7z" fill="#f6c317" /></g>,
  <g><rect x="2.700" y="2.700" width="26.600" height="26.600" rx="1.500" fill="#1b8fc6" stroke="#b5e2f5" strokeWidth="1.600" /><path d="M6 6h20v20H6z" fill="none" stroke="#d4effa" strokeWidth="1" /><path d="M5 14h3l2 9 3-14 3 12 3-12 3 13 2-8h3" fill="none" stroke="#fff" strokeWidth="1.700" /></g>,
  <g><path d="M2 2h13a14 14 0 1 1-13 13z" fill="#f1f3f5" /><circle cx="16" cy="16" r="11" fill="url(#globe)" /><path d="M9 8v16M13 6v20M17 5v22M21 7v18M6 12h20M5 16h22M6 20h20" stroke="#1465c8" strokeWidth=".5" opacity=".5" /><circle cx="5" cy="5" r="1.500" fill="#17233c" /></g>,
  FilesIcon,
];

function Dock() {
  return (
    <div className="relative flex h-[47px] items-start bg-[#081127] pt-[7px] pl-[8px]">
      <svg className="absolute inset-0 h-full w-full">
        <defs>
          <linearGradient id="teal" x1="0" y1="0" x2="1" y2="1"><stop offset="0" stopColor="#3f8af0" /><stop offset="1" stopColor="#35c7a5" /></linearGradient>
          <linearGradient id="pink" x1="0" y1="0" x2="0" y2="1"><stop offset="0" stopColor="#ff006f" /><stop offset="1" stopColor="#c6004e" /></linearGradient>
          <linearGradient id="globe" x1=".7" y1="0" x2=".2" y2="1"><stop offset="0" stopColor="#0a58d6" /><stop offset="1" stopColor="#4fb4f5" /></linearGradient>
        </defs>
        <rect x="0" y="0" width="620" height="47" fill="#0d1c30" opacity=".3" />
        <g stroke="#3a5560" strokeWidth="1.500" strokeDasharray="2 4 1 6" opacity=".5">
          <path d="M95 40l90-14M120 45l100-20M170 44l60-8M350 3l60 8M355 9l50 5M300 22l80-7M450 12l110-8M545 6l25 4" />
        </g>
        <path d="M1470 2.500h28" stroke="#55606c" strokeWidth="2" strokeDasharray="2 1" opacity=".7" />
        <path d="M545 2l22 2v14l-18 2z" fill="#2a3a40" opacity=".5" />
      </svg>
      <div className="relative flex flex-1 gap-[11px]">
        {dock.map((d, i) => <Ico key={i} s={32} vb="0 0 32 32">{d}</Ico>)}
        <Ico s={32} vb="0 0 32 32" className="mr-[9px] ml-auto"><path d="M5 5h22l-1 25H6z" fill="#607d8b" /><path d="M3 3h26v4H3z" fill="#78909c" /><path d="M12 2h8v2h-8z" fill="#78909c" /><path d="M10.500 9v17M16 9v17M21.500 9v17" stroke="#455a64" strokeWidth="2.200" /></Ico>
      </div>
      <svg className="absolute inset-0 h-full w-full"><g fill="#d6d6d6"><path d="M1311 0h5l-2.500 3z" /><path d="M1311.500 44h1.500v3h-1.500zM1314.500 44h1.500v3h-1.500z" /></g><path d="M150 47l3-3 3 3M1397 47l3-3 3 3" fill="none" stroke="#d6d6d6" strokeWidth="1.300" /></svg>
    </div>
  );
}

export default function App() {
  return (
    <div className="flex h-[900px] w-[1600px] flex-col overflow-hidden bg-[#444] font-['Noto_Sans',sans-serif] text-[14.3px] leading-[20px]">
      <HostBar />
      <MachineMenu />
      <GuestPanel />
      <div className="relative flex h-[758px] shrink-0 overflow-hidden">
        <Wallpaper />
        <Launcher />
        <div className="absolute top-[16px] left-[81px] flex w-[52px] flex-col items-center">
          <svg width="48" height="37" className="block">
            <defs><linearGradient id="drive" x1="0" y1="0" x2="1" y2="1"><stop offset="0" stopColor="#f1f1f1" /><stop offset="1" stopColor="#d6d6d6" /></linearGradient></defs>
            <path d="M8 1h32l6.500 26v7.500h-45V27z" fill="url(#drive)" stroke="#bdbdbd" strokeWidth=".8" />
            <path d="M2 26.500h44" stroke="#bcbcbc" /><path d="M1.500 30h45v4.500h-45z" fill="#c9c9c9" stroke="#8d8d8d" strokeWidth=".7" /><path d="M4 31h40v2.500H4z" fill="#333" />
          </svg>
          <Fit className="mt-[3px] w-[49px] text-white [text-shadow:1px_1px_1px_#000]">sf_leap</Fit>
        </div>
        <FilesWindow />
        <svg className="absolute top-[144px] left-[1054px]" width="16" height="22"><path d="M1.500 1v16l3.600-3.300 2.600 5.800 2.800-1.200-2.500-5.600h5z" fill="#fff" stroke="#111" strokeWidth="1.200" /></svg>
      </div>
      <StatusBar />
      <Dock />
    </div>
  );
}
